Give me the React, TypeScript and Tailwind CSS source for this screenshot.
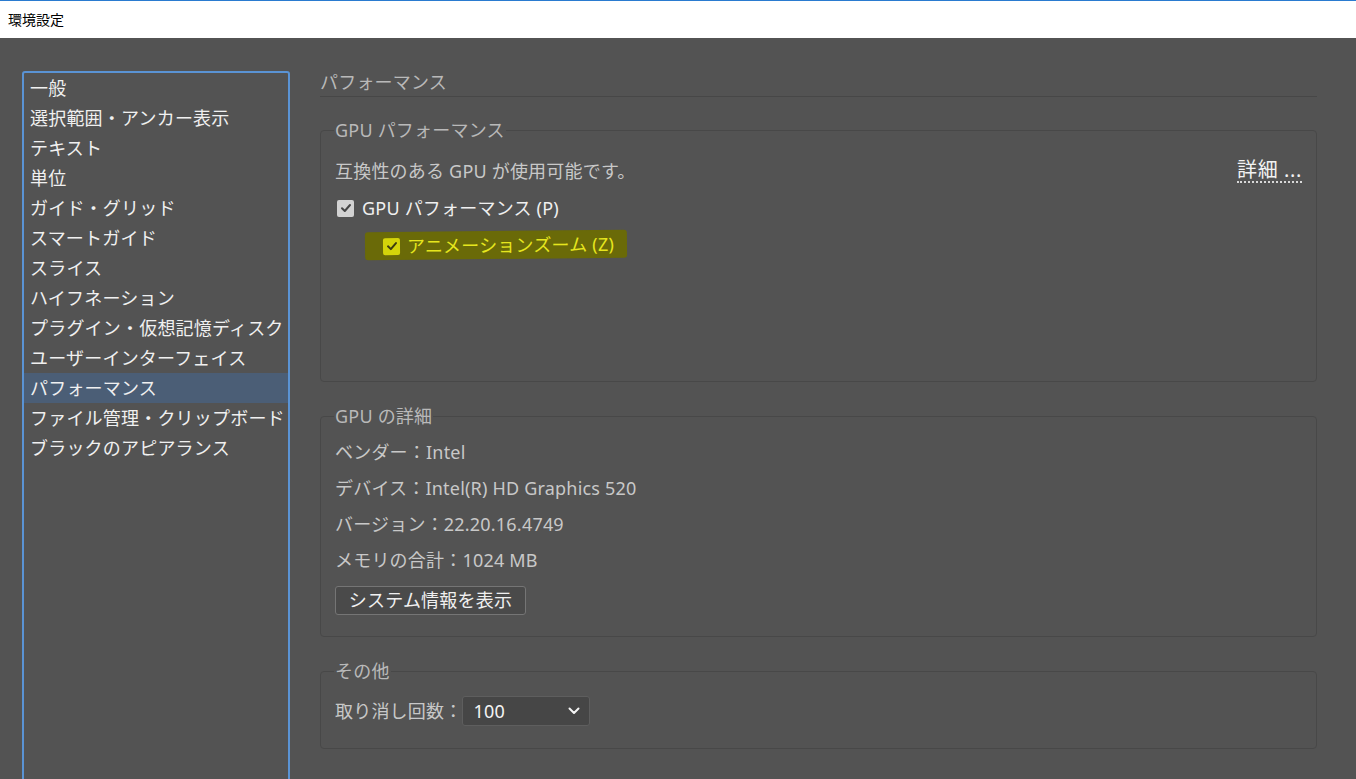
import React from 'react';

const font = { fontFamily: '"Noto Sans", "Noto Sans CJK JP", sans-serif' };

const categories = [
  '一般',
  '選択範囲・アンカー表示',
  'テキスト',
  '単位',
  'ガイド・グリッド',
  'スマートガイド',
  'スライス',
  'ハイフネーション',
  'プラグイン・仮想記憶ディスク',
  'ユーザーインターフェイス',
  'パフォーマンス',
  'ファイル管理・クリップボード',
  'ブラックのアピアランス',
];

const Check: React.FC<{ yellow?: boolean }> = ({ yellow }) => (
  <span
    className={`flex h-[17px] w-[17px] items-center justify-center rounded-[2px] ${
      yellow ? 'bg-[#d4d40a]' : 'bg-[#d2d2d2]'
    }`}
  >
    <svg width="12" height="12" viewBox="0 0 12 12" fill="none">
      <path d="M2 6.2 L4.8 9 L10 3" stroke={yellow ? '#3d3d10' : '#454545'} strokeWidth="2" strokeLinecap="round" strokeLinejoin="round" />
    </svg>
  </span>
);

const App: React.FC = () => {
  const selected = 'パフォーマンス';

  return (
    <div className="h-[779px] w-[1356px] overflow-hidden bg-[#535353] tracking-[0.2px]" style={font}>
      {/* Title bar */}
      <div className="flex h-[38px] items-center border-t border-[#2a7bd0] bg-white pl-[8px] text-[14px] tracking-normal text-black">
        環境設定
      </div>

      <div className="flex h-[741px] overflow-hidden pl-[22px] pt-[33px]">
        {/* Category list */}
        <div className="h-[760px] w-[268px] shrink-0 rounded-[3px] border-2 border-[#5a93d4]">
          {categories.map((c) => (
            <div
              key={c}
              className={`flex h-[30px] items-center pb-[1px] pl-[6px] text-[18px] leading-none text-[#f0f0f0] ${
                c === selected ? 'bg-[#4b5e76]' : ''
              }`}
            >
              {c}
            </div>
          ))}
        </div>

        {/* Right panel */}
        <div className="ml-[30px] w-[997px]">
          <div className="flex h-[26px] items-start border-b border-[#474747] text-[18px] leading-[23px] text-[#b9b9b9]">
            パフォーマンス
          </div>

          {/* GPU performance */}
          <fieldset className="mt-[21px] h-[264px] rounded-[4px] border border-[#484848] px-[14px]">
            <legend className="-ml-[1px] px-[1px] text-[18px] leading-[24px] text-[#b9b9b9]">GPU パフォーマンス</legend>
            <div className="mt-[17px] flex h-[24px] items-center justify-between text-[18px] text-[#c8c8c8]">
              <span>互換性のある GPU が使用可能です。</span>
              <span className="border-b-2 border-dotted border-[#d8d8d8] text-[20px] leading-[22px] tracking-[0.6px] text-[#f2f2f2]">詳細 ...</span>
            </div>
            <div className="mt-[13px] flex h-[24px] items-center gap-[8px] pl-[2px] text-[18px] text-[#f0f0f0]">
              <Check />
              <span>GPU パフォーマンス (P)</span>
            </div>
            <div className="ml-[30px] mt-[11px] flex h-[28px] w-[262px] -rotate-[0.6deg] items-center gap-[7px] rounded-[3px] bg-[#6a6a08] pl-[18px] text-[18px] text-[#e6e61e]">
              <Check yellow />
              <span>アニメーションズーム (Z)</span>
            </div>
          </fieldset>

          {/* GPU details */}
          <fieldset className="mt-[22px] h-[233px] rounded-[4px] border border-[#484848] px-[14px]">
            <legend className="-ml-[1px] px-[1px] text-[18px] leading-[24px] text-[#b9b9b9]">GPU の詳細</legend>
            <div className="mt-[6px] flex flex-col text-[18px] text-[#c8c8c8]">
              {[
                'ベンダー：Intel',
                'デバイス：Intel(R) HD Graphics 520',
                'バージョン：22.20.16.4749',
                'メモリの合計：1024 MB',
              ].map((t) => (
                <div key={t} className="flex h-[36px] items-center">
                  {t}
                </div>
              ))}
            </div>
            <button className="mt-[8px] flex h-[29px] w-[191px] items-center justify-center rounded-[3px] border border-[#757575] bg-[#4a4a4a] text-[18px] text-[#f0f0f0]">
              システム情報を表示
            </button>
          </fieldset>

          {/* Other */}
          <fieldset className="mt-[22px] h-[90px] rounded-[4px] border border-[#484848] px-[14px]">
            <legend className="-ml-[1px] px-[1px] text-[18px] leading-[24px] text-[#b9b9b9]">その他</legend>
            <div className="mt-[13px] flex items-center text-[18px] text-[#c8c8c8]">
              <span>取り消し回数：</span>
              <div className="flex h-[30px] w-[128px] items-center justify-between rounded-[3px] border border-[#5e5e5e] bg-[#464646] pl-[10px] pr-[8px] text-[#f4f4f4]">
                <span>100</span>
                <svg width="14" height="10" viewBox="0 0 14 10" fill="none">
                  <path d="M2.5 2.5 L7 7 L11.5 2.5" stroke="#f4f4f4" strokeWidth="2" strokeLinecap="round" strokeLinejoin="round" />
                </svg>
              </div>
            </div>
          </fieldset>
        </div>
      </div>
    </div>
  );
};

export default App;
